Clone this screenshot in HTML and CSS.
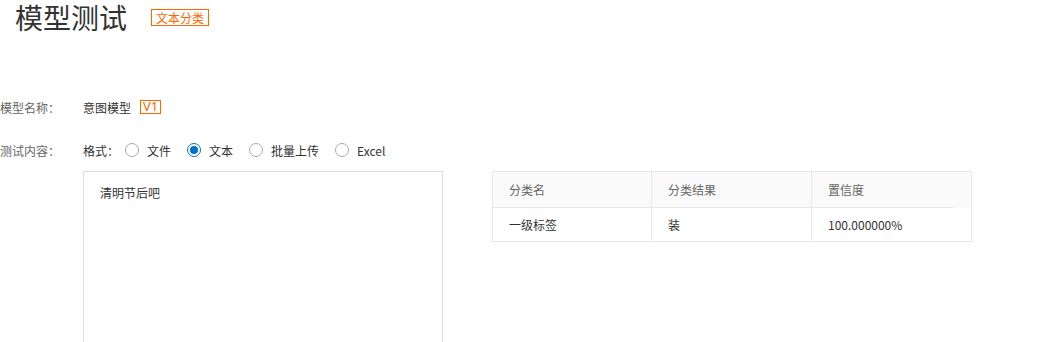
FILE: index.html
```html
<!DOCTYPE html>
<html lang="zh-CN">

<head>
  <meta charset="UTF-8">
  <meta name="viewport" content="width=device-width, initial-scale=1.0">
  <title>模型测试</title>
  <link rel="stylesheet" href="styles.css">
</head>

<body>
  <!-- 页头 -->
  <div class="page-head">
    <h1 class="page-title">模型测试</h1>
    <span class="tag">文本分类</span>
  </div>

  <!-- 表单 -->
  <div class="form">
    <div class="form-row">
      <div class="form-label">模型名称：</div>
      <div class="form-value">
        <span>意图模型</span>
        <span class="version">V1</span>
      </div>
    </div>

    <div class="form-row row-content">
      <div class="form-label">测试内容：</div>
      <div class="form-value">
        <span class="format-label">格式：</span>
        <label class="radio"><span class="radio-dot"></span><span class="radio-text">文件</span></label>
        <label class="radio checked"><span class="radio-dot"></span><span class="radio-text">文本</span></label>
        <label class="radio"><span class="radio-dot"></span><span class="radio-text">批量上传</span></label>
        <label class="radio"><span class="radio-dot"></span><span class="radio-text">Excel</span></label>
      </div>
    </div>

    <div class="test-area">
      <textarea class="test-input">清明节后吧</textarea>

      <div class="result">
        <div class="result-head">
          <div class="cell col1">分类名</div>
          <div class="cell col2">分类结果</div>
          <div class="cell col3">置信度</div>
          <div class="gutter"></div>
        </div>
        <div class="result-row">
          <div class="cell col1">一级标签</div>
          <div class="cell col2">装</div>
          <div class="cell col3">100.000000%</div>
        </div>
      </div>
    </div>
  </div>
</body>

</html>
```

FILE: styles.css
```css
body {
  margin: 0;
  font-family: "Noto Sans CJK SC", "Noto Sans", sans-serif;
  font-size: 12px;
  color: #333;
  background-color: #fff;
}

.page-head {
  display: flex;
  align-items: center;
  height: 34px;
  padding-left: 15px;
}

.page-title {
  margin: 0;
  font-size: 28px;
  font-weight: normal;
  line-height: 34px;
  color: #333;
}

.tag {
  margin-left: 24px;
  padding: 0 4px;
  border: 1px solid #f60;
  color: #f60;
  font-size: 12px;
  line-height: 15px;
}

.form {
  margin-top: 61px;
}

.form-row {
  display: flex;
  align-items: center;
  height: 24px;
}

.row-content {
  margin-top: 19px;
}

.form-label {
  width: 83px;
  color: #666;
}

.form-value {
  display: flex;
  align-items: center;
}

.version {
  margin-left: 9px;
  padding: 0 2px;
  border: 1px solid #f60;
  color: #f60;
  font-family: "Noto Sans", sans-serif;
  font-size: 13px;
  height: 12px;
  line-height: 11px;
}

.format-label {
  margin-right: 6px;
}

.radio {
  display: flex;
  align-items: center;
  margin-right: 8px;
}

.radio-dot {
  position: relative;
  width: 14px;
  height: 14px;
  box-sizing: border-box;
  border: 1px solid #aaa;
  border-radius: 50%;
}

.radio.checked .radio-dot {
  border-color: #0070cc;
}

.radio.checked .radio-dot:after {
  content: "";
  position: absolute;
  left: 2px;
  top: 2px;
  width: 8px;
  height: 8px;
  border-radius: 50%;
  background-color: #0070cc;
}

.radio-text {
  padding: 0 8px;
}

.test-area {
  display: flex;
  align-items: flex-start;
  margin-top: 9px;
  margin-left: 83px;
}

.test-input {
  width: 360px;
  height: 200px;
  box-sizing: border-box;
  margin: 0;
  padding: 12px 16px;
  border: 1px solid #ddd;
  font-family: inherit;
  font-size: 12px;
  line-height: 18px;
  color: #333;
  resize: none;
  outline: none;
}

.result {
  width: 480px;
  box-sizing: border-box;
  margin-left: 49px;
  border: 1px solid #e8e8e8;
}

.result-head,
.result-row {
  display: flex;
}

.result-head {
  background-color: #fafafa;
  color: #666;
}

.cell {
  box-sizing: border-box;
  padding-left: 16px;
}

.result-head .cell {
  height: 36px;
  line-height: 35px;
  border-bottom: 1px solid #e8e8e8;
}

.result-row .cell {
  height: 33px;
  line-height: 33px;
}

.col1 {
  width: 159px;
  border-right: 1px solid #e8e8e8;
}

.col2 {
  width: 160px;
  border-right: 1px solid #e8e8e8;
}

.col3 {
  width: 159px;
}

.result-head .col3 {
  width: 142px;
}

.gutter {
  width: 17px;
}
```
